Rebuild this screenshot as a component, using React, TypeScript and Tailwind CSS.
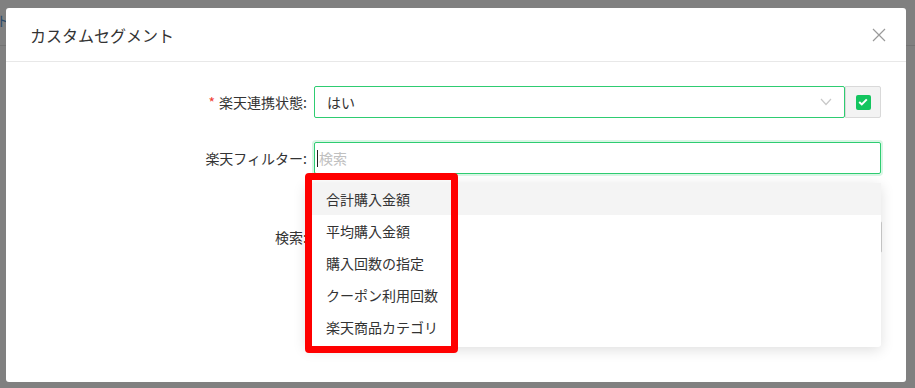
import React from "react";

const font = { fontFamily: '"Noto Sans CJK JP", "Noto Sans", sans-serif' };

export default function App() {
  const items = ["合計購入金額", "平均購入金額", "購入回数の指定", "クーポン利用回数", "楽天商品カテゴリ"];
  return (
    <div className="relative w-[915px] h-[388px] overflow-hidden bg-[#808080]" style={font}>
      {/* background page hint */}
      <div className="absolute left-0 top-[45px] w-full h-px bg-[#737373]" />
      <div className="absolute left-[-4px] top-[10px] text-[14px] text-[#2a4a6a]">ト</div>

      {/* modal */}
      <div className="absolute left-[6px] top-[8px] w-[900px] h-[374px] bg-white rounded-[3px] flex flex-col">
        <div className="h-[54px] flex items-center justify-between pl-[24px] pr-[20px] border-b border-[#e8e8e8]">
          <span className="text-[16px] text-[#333] leading-none">カスタムセグメント</span>
          <svg width="14" height="14" viewBox="0 0 14 14" className="mr-[0px]">
            <path d="M1 1 L13 13 M13 1 L1 13" stroke="#9a9a9a" strokeWidth="1.2" fill="none" />
          </svg>
        </div>

        <div className="flex flex-col pt-[24px]">
          {/* row 1 */}
          <div className="flex items-center h-[32px]">
            <div className="w-[302px] pr-[1px] text-right text-[14px] text-[#333]">
              <span className="text-[#f04134] mr-[4px]">*</span>楽天連携状態:
            </div>
            <div className="ml-[6px] w-[531px] h-[32px] border border-[#2ecc71] rounded-[2px] flex items-center justify-between pl-[12px] pr-[12px]">
              <span className="text-[14px] text-[#333]">はい</span>
              <svg width="12" height="8" viewBox="0 0 12 8">
                <path d="M1 1 L6 6.5 L11 1" stroke="#c8c8c8" strokeWidth="1.2" fill="none" />
              </svg>
            </div>
            <div className="w-[36px] h-[32px] border border-[#d9d9d9] bg-[#f3f3f3] rounded-r-[2px] flex items-center justify-center">
              <div className="w-[15px] h-[15px] rounded-[2px] bg-[#13c55f] flex items-center justify-center">
                <svg width="10" height="8" viewBox="0 0 10 8">
                  <path d="M1.2 4 L3.8 6.4 L8.8 1.4" stroke="#fff" strokeWidth="2" fill="none" />
                </svg>
              </div>
            </div>
          </div>

          {/* row 2 */}
          <div className="flex items-center h-[32px] mt-[24px]">
            <div className="w-[302px] pr-[1px] text-right text-[14px] text-[#333]">楽天フィルター:</div>
            <div className="ml-[6px] w-[567px] h-[32px] border border-[#2ecc71] rounded-[2px] flex items-center pl-[2px] shadow-[0_0_0_2px_rgba(46,204,113,0.18)]">
              <div className="w-px h-[17px] bg-[#222]" />
              <span className="text-[14px] text-[#c0c0c0] ml-px">検索</span>
            </div>
          </div>

          {/* row 3 */}
          <div className="flex items-center h-[32px] mt-[47px]">
            <div className="w-[302px] pr-[1px] text-right text-[14px] text-[#333]">検索:</div>
            <div className="ml-[6px] w-[568px] h-[32px] border border-[#d0d0d0] rounded-[2px]" />
          </div>
        </div>
      </div>

      {/* dropdown */}
      <div className="absolute left-[306px] top-[183px] w-[575px] h-[164px] bg-white rounded-[3px] shadow-[0_3px_14px_rgba(0,0,0,0.13)] flex flex-col pb-[4px]">
        {items.map((t, i) => (
          <div
            key={t}
            className={`h-[32px] flex items-center pl-[20px] text-[14px] text-[#333] ${i === 0 ? "bg-[#f4f4f4]" : ""}`}
          >
            {t}
          </div>
        ))}
      </div>

      {/* red highlight */}
      <div className="absolute left-[305px] top-[173px] w-[153px] h-[180px] border-[7px] border-[#ff0000] rounded-[4px]" />
    </div>
  );
}
